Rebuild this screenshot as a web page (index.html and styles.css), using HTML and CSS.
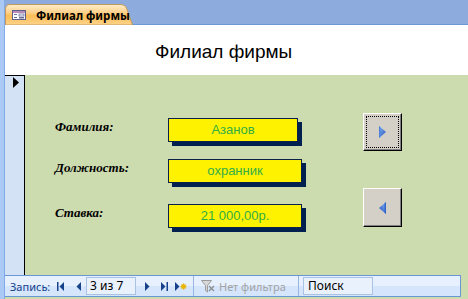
FILE: index.html
```html
<!DOCTYPE html>
<html lang="ru">
<head>
<meta charset="utf-8">
<title>Филиал фирмы</title>
<link rel="stylesheet" href="styles.css">
</head>
<body>
<div class="app">
  <div class="edge"></div>
  <div class="window">
    <div class="tabbar">
      <div class="tab">
        <svg class="tab-bg" width="128" height="21" viewBox="0 0 128 21">
          <defs>
            <linearGradient id="tg" x1="0" y1="0" x2="0" y2="1">
              <stop offset="0" stop-color="#ffeecb"/>
              <stop offset="0.4" stop-color="#fdd089"/>
              <stop offset="0.55" stop-color="#fbbd57"/>
              <stop offset="1" stop-color="#fdd48a"/>
            </linearGradient>
          </defs>
          <path d="M0.5 21 V5 Q0.5 0.5 5 0.5 H116 Q120 0.5 121.5 4 L127.5 21 Z" fill="url(#tg)" stroke="#c39a5c" stroke-width="1"/>
        </svg>
        <svg class="tab-icon" width="14" height="10" viewBox="0 0 14 10">
          <rect x="0.5" y="0.5" width="13" height="9" fill="#fff" stroke="#5d5f8e"/>
          <rect x="1" y="1" width="12" height="2" fill="#b98ab8"/>
          <rect x="2" y="4" width="3" height="1" fill="#6b6d9b"/>
          <rect x="7" y="4" width="5" height="2" fill="#fff" stroke="#6b6d9b" stroke-width="0.8"/>
          <rect x="2" y="7" width="3" height="1" fill="#6b6d9b"/>
          <rect x="7" y="7" width="5" height="1.5" fill="#6b6d9b"/>
        </svg>
        <span class="tab-title">Филиал фирмы</span>
      </div>
    </div>

    <div class="header">
      <h1 class="title">Филиал фирмы</h1>
    </div>

    <div class="detail">
      <div class="selector">
        <svg class="sel-arrow" width="6" height="11" viewBox="0 0 6 11"><polygon points="0,0 6,5.5 0,11" fill="#000"/></svg>
      </div>
      <div class="canvas">
        <div class="fields">
          <div class="row r1">
            <span class="label">Фамилия:</span>
            <div class="box narrow">Азанов</div>
          </div>
          <div class="row r2">
            <span class="label">Должность:</span>
            <div class="box">охранник</div>
          </div>
          <div class="row r3">
            <span class="label">Ставка:</span>
            <div class="box">21 000,00р.</div>
          </div>
        </div>
        <div class="buttons">
          <button class="btn focused" type="button">
            <svg width="7" height="12" viewBox="0 0 7 12">
              <defs>
                <linearGradient id="bg1" x1="0" y1="0" x2="1" y2="1">
                  <stop offset="0" stop-color="#8fb8f2"/>
                  <stop offset="1" stop-color="#1d4fbd"/>
                </linearGradient>
              </defs>
              <polygon points="0,0 7,6 0,12" fill="url(#bg1)"/>
              <polygon points="0,0 1.5,1.3 1.5,10.7 0,12" fill="#4f84dc"/>
            </svg>
          </button>
          <button class="btn second" type="button">
            <svg width="7" height="12" viewBox="0 0 7 12">
              <defs>
                <linearGradient id="bg2" x1="1" y1="0" x2="0" y2="1">
                  <stop offset="0" stop-color="#8fb8f2"/>
                  <stop offset="1" stop-color="#1d4fbd"/>
                </linearGradient>
              </defs>
              <polygon points="7,0 0,6 7,12" fill="url(#bg2)"/>
              <polygon points="7,0 5.5,1.3 5.5,10.7 7,12" fill="#2f65cc"/>
            </svg>
          </button>
        </div>
      </div>
    </div>

    <div class="navrow">
      <div class="navbar">
        <span class="nav-label">Запись:</span>
        <svg class="ni first" width="7" height="9" viewBox="0 0 7 9"><rect x="0" y="0" width="1.5" height="9" fill="#15428b"/><polygon points="7,0 2.5,4.5 7,9" fill="#15428b"/></svg>
        <svg class="ni prev" width="5" height="9" viewBox="0 0 5 9"><polygon points="5,0 0.5,4.5 5,9" fill="#15428b"/></svg>
        <span class="current">3 из 7</span>
        <svg class="ni next" width="5" height="9" viewBox="0 0 5 9"><polygon points="0,0 4.5,4.5 0,9" fill="#15428b"/></svg>
        <svg class="ni last" width="7" height="9" viewBox="0 0 7 9"><polygon points="0,0 4.5,4.5 0,9" fill="#15428b"/><rect x="5.5" y="0" width="1.5" height="9" fill="#15428b"/></svg>
        <svg class="ni new" width="12" height="9" viewBox="0 0 12 9"><polygon points="0,0 4.5,4.5 0,9" fill="#15428b"/><g stroke="#e8b400" stroke-width="1.4"><line x1="8.5" y1="1.5" x2="8.5" y2="7.5"/><line x1="5.5" y1="4.5" x2="11.5" y2="4.5"/><line x1="6.4" y1="2.4" x2="10.6" y2="6.6"/><line x1="10.6" y1="2.4" x2="6.4" y2="6.6"/></g></svg>
        <span class="sep s1"></span>
        <svg class="ni filter" width="14" height="13" viewBox="0 0 14 13"><polygon points="0.5,0.5 10.5,0.5 6.5,5.5 6.5,12 4.5,10.5 4.5,5.5" fill="#d8d8d8" stroke="#9a9a9a"/><g stroke="#8c8c8c" stroke-width="1.3"><line x1="8" y1="6" x2="13" y2="11"/><line x1="13" y1="6" x2="8" y2="11"/></g></svg>
        <span class="nofilter">Нет фильтра</span>
        <span class="sep s2"></span>
        <span class="search">Поиск</span>
      </div>
    </div>
  </div>
</div>
</body>
</html>
```

FILE: styles.css
```css
* { box-sizing: border-box; }

html, body {
  margin: 0;
  padding: 0;
  width: 468px;
  height: 299px;
  overflow: hidden;
  background: #cddcaf;
}

.app {
  display: flex;
  width: 468px;
  height: 299px;
}

.edge {
  width: 5px;
  flex: none;
  background: #abc9f5;
  border-right: 1px solid #82aae6;
}

.window {
  flex: 1;
  display: flex;
  flex-direction: column;
  min-width: 0;
}

/* tab strip */
.tabbar {
  height: 25px;
  flex: none;
  background: #8dabdc;
  box-shadow: inset 0 -1px 0 #6b98d6;
  display: flex;
  align-items: flex-end;
}

.tab {
  position: relative;
  width: 128px;
  height: 21px;
  display: flex;
  align-items: center;
  padding-left: 7px;
}

.tab-bg {
  position: absolute;
  left: 0;
  top: 0;
}

.tab-icon {
  position: relative;
  flex: none;
  margin-top: 1px;
}

.tab-title {
  position: relative;
  margin-left: 10px;
  font-family: "Noto Sans", "DejaVu Sans", sans-serif;
  font-weight: bold;
  font-size: 11.5px;
  color: #000;
  margin-top: 1px;
}

/* form header */
.header {
  height: 50px;
  flex: none;
  background: #fff;
  display: flex;
  align-items: center;
}

.title {
  margin: 0;
  padding-left: 150px;
  font-family: "Liberation Sans", Arial, sans-serif;
  font-weight: normal;
  font-size: 19px;
  color: #000;
  margin-top: 3px;
}

/* detail */
.detail {
  height: 200px;
  flex: none;
  display: flex;
}

.selector {
  width: 20px;
  flex: none;
  background: #d3e2f5;
  border-top: 1px solid #000;
  border-right: 1px solid #000;
  padding: 1px 0 0 8px;
}

.sel-arrow { display: block; }

.canvas {
  flex: 1;
  background: #cddcaf;
  display: flex;
}

.fields {
  width: 338px;
  flex: none;
  padding: 43px 0 0 30px;
}

.row {
  display: flex;
  align-items: center;
  height: 24px;
}

.r2 { margin-top: 17px; }
.r3 { margin-top: 21px; }

.label {
  width: 113px;
  flex: none;
  font-family: "Liberation Serif", "Times New Roman", serif;
  font-weight: bold;
  font-style: italic;
  font-size: 13px;
  color: #000;
  margin-bottom: 6px;
}

.box {
  width: 134px;
  height: 24px;
  background: #fff200;
  border: 1px solid #0b2148;
  box-shadow: 4px 4px 0 #00204f;
  font-family: "Liberation Sans", Arial, sans-serif;
  font-size: 13px;
  line-height: 21px;
  text-align: center;
  color: #32ae45;
}

.box.narrow { width: 130px; }

.buttons {
  display: flex;
  flex-direction: column;
  padding-top: 38px;
}

.btn {
  width: 39px;
  height: 38px;
  padding: 0;
  margin: 0;
  background: #d4d0c8;
  border: 1px solid;
  border-color: #fff #000 #000 #fff;
  box-shadow: inset -1px -1px 0 #808080;
  display: flex;
  align-items: center;
  justify-content: center;
}

.btn svg { display: block; }

.btn.focused {
  outline: 1px dotted #000;
  outline-offset: -4px;
}

.btn.second {
  margin-top: 37px;
  height: 39px;
}

/* navigation bar */
.navrow {
  height: 24px;
  flex: none;
  background: #cddcaf;
}

.navbar {
  width: 456px;
  height: 22px;
  display: flex;
  align-items: center;
  background: linear-gradient(#e6f0fe 0, #e6f0fe 50%, #d4e5fc 50%, #d4e5fc 100%);
  border-top: 1px solid #6b96d4;
  border-bottom: 1px solid #6b96d4;
  border-right: 1px solid #6b96d4;
  font-family: "Noto Sans", "DejaVu Sans", sans-serif;
  font-size: 11px;
}

.nav-label {
  width: 52px;
  flex: none;
  padding-left: 5px;
  color: #15428b;
}

.ni { display: block; flex: none; }
.prev { margin-left: 12px; }
.next { margin-left: 9px; }
.last { margin-left: 11px; }
.new { margin-left: 7px; }
.filter { margin-left: 7px; }

.current {
  margin-left: 5px;
  width: 50px;
  height: 18px;
  flex: none;
  border: 1px solid #a9c2e4;
  background: #e9f1fd;
  color: #000;
  font-size: 12px;
  line-height: 16px;
  padding-left: 3px;
}

.sep {
  width: 1px;
  height: 20px;
  flex: none;
  background: #97b5e0;
}

.s1 { margin-left: 6px; }

.nofilter {
  width: 79px;
  flex: none;
  margin-left: 4px;
  color: #a3a3a3;
  font-size: 11px;
}

.search {
  margin-left: 4px;
  width: 70px;
  height: 18px;
  flex: none;
  border: 1px solid #a9c2e4;
  background: #e9f1fd;
  color: #000;
  font-size: 12px;
  line-height: 16px;
  padding-left: 4px;
}
```
